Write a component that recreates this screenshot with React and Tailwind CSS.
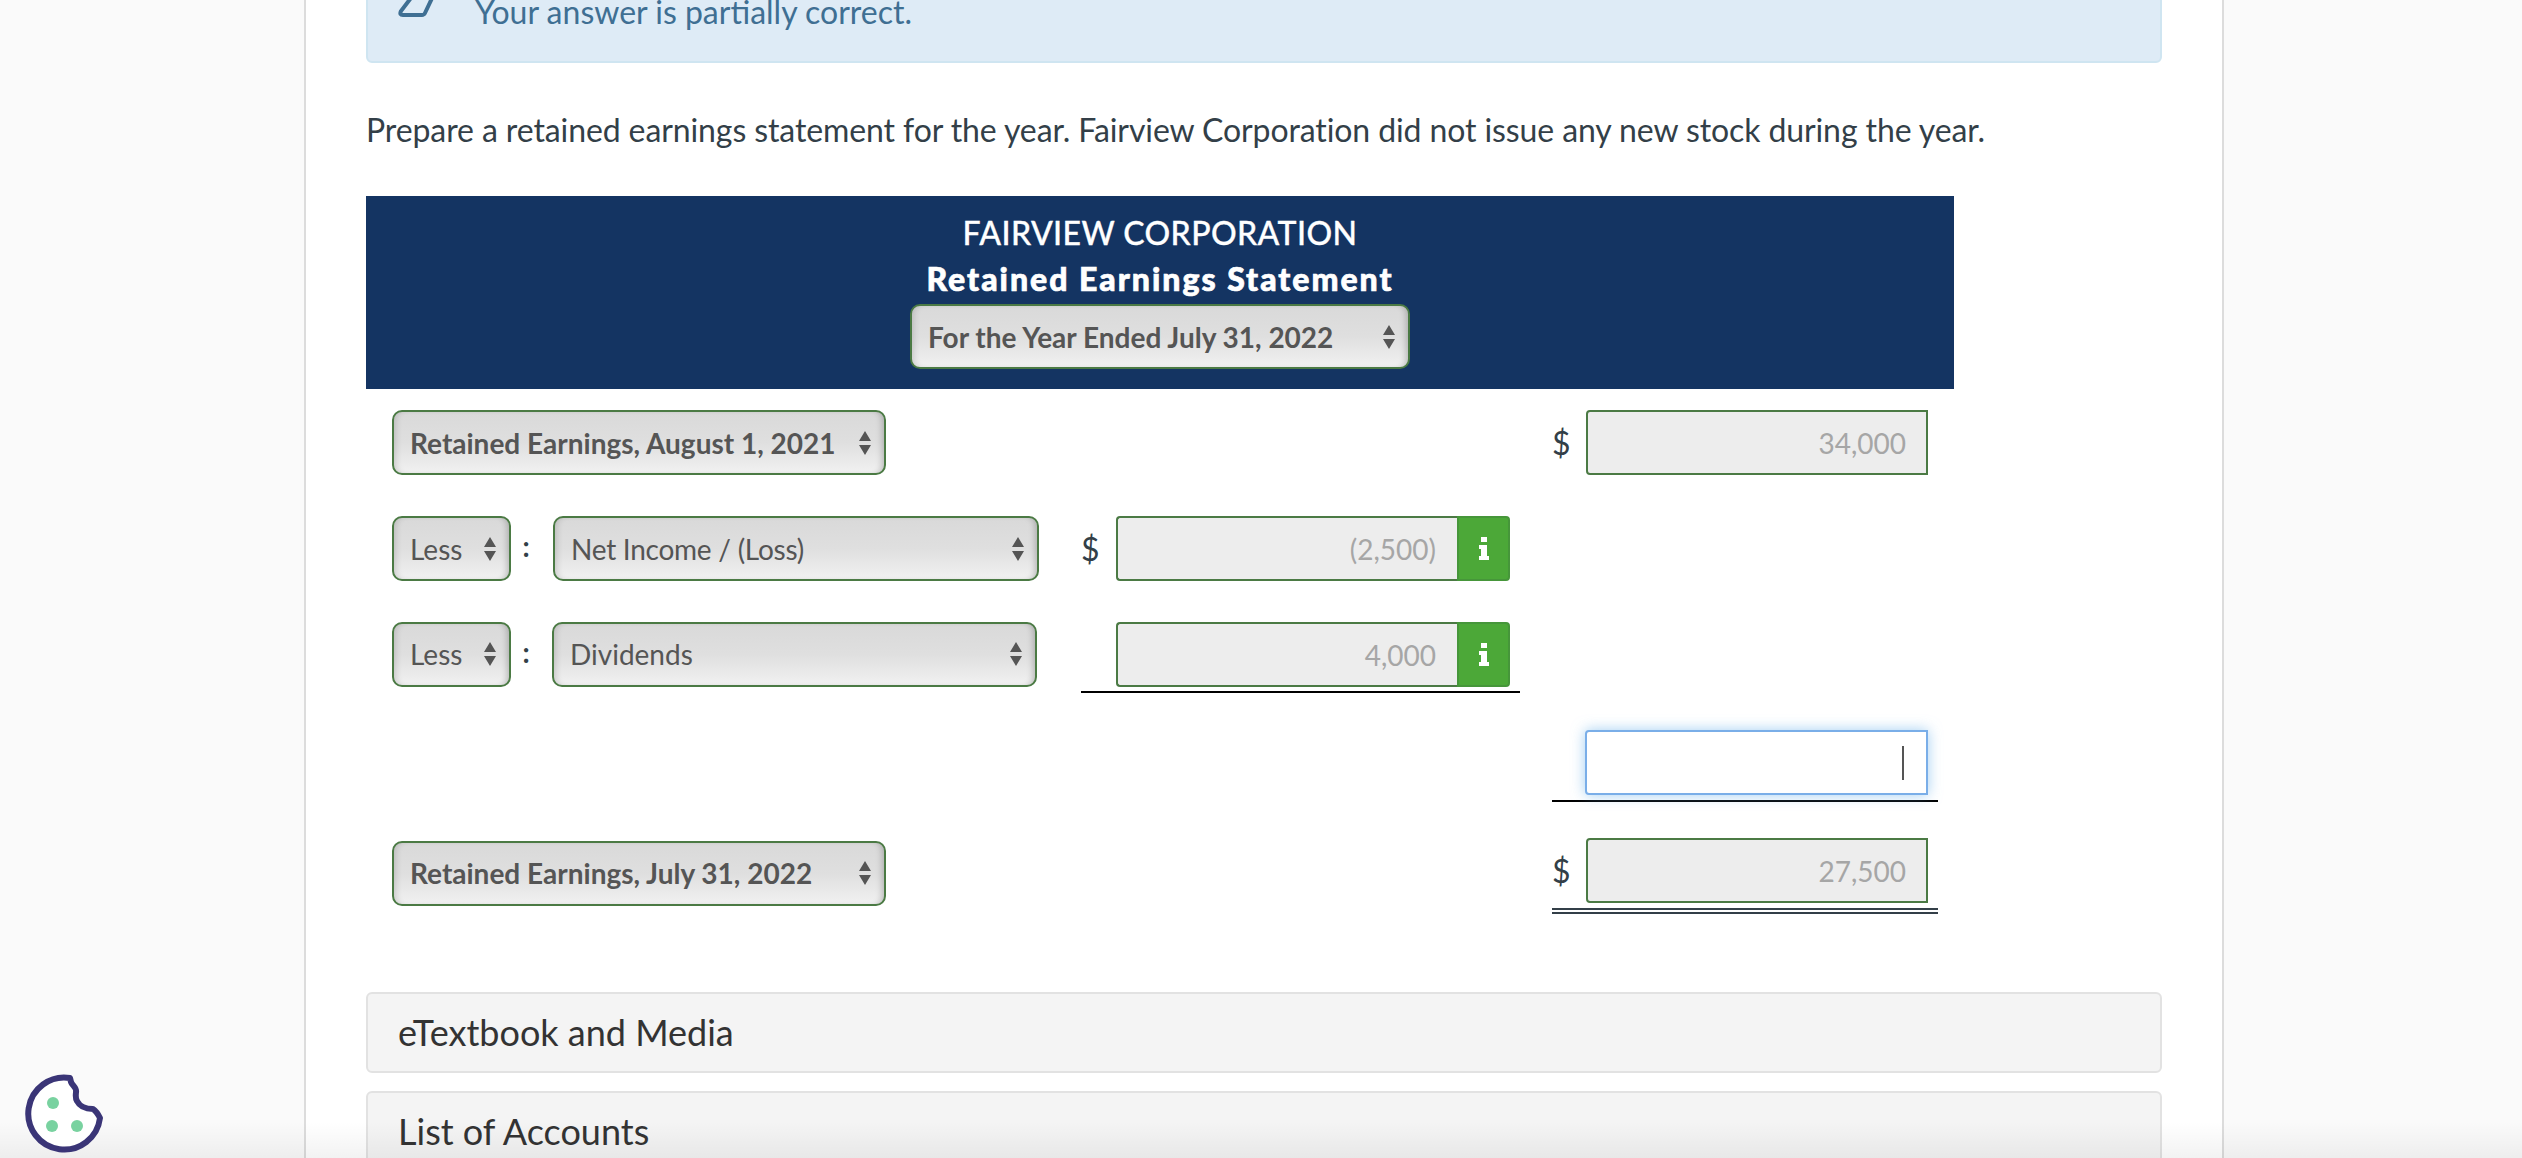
import React from 'react';

const SelectArrows = () => (
  <svg width="14" height="26" viewBox="0 0 14 26" className="shrink-0">
    <path d="M7 1 L13 11 L1 11 Z M1 15 L13 15 L7 25 Z" fill="#555" />
  </svg>
);

const Select = ({ label, bold, className }) => (
  <div
    className={`flex h-[65px] shrink-0 items-center justify-between rounded-[10px] border-2 border-[#4b7a44] bg-linear-to-b from-[#d9d9d9] via-[#dfdfdf] to-[#f1f1f1] pl-[16px] pr-[12px] text-[28px] text-[#555] shadow-[inset_6px_0_6px_-4px_rgba(0,0,0,0.15),inset_-6px_0_6px_-4px_rgba(0,0,0,0.22)] ${bold ? 'font-bold' : ''} ${className}`}
  >
    <span className="whitespace-nowrap">{label}</span>
    <SelectArrows />
  </div>
);

const AmountBox = ({ value, hasInfo }) => (
  <div className="flex h-[65px] flex-1">
    <div
      className={`flex flex-1 items-center justify-end rounded-l-[4px] border-2 border-[#4b7a44] bg-[#ededed] text-[28px] text-[#a6a6a6] ${hasInfo ? 'border-r-0 pr-[21px]' : 'pr-[20px]'}`}
    >
      {value}
    </div>
    {hasInfo && (
      <div className="flex w-[53px] items-center justify-center rounded-r-[4px] border-2 border-[#46963a] bg-[#4ca838]">
        <svg width="12" height="24" viewBox="0 0 12 24">
          <path d="M3 0 H9 V5 H3 Z M1 8 H9 V19 H11 V23 H1 V19 H3 V12 H1 Z" fill="#fff" />
        </svg>
      </div>
    )}
  </div>
);

const Dollar = ({ className }) => (
  <span className={`shrink-0 text-[32px] leading-[65px] text-[#333f48] ${className}`}>$</span>
);

const Row = ({ left, middle, right, className }) => (
  <div className={`flex items-start ${className}`}>
    <div className="flex w-[715px] shrink-0 items-start pl-[26px]">{left}</div>
    <div className="w-[439px] shrink-0">{middle}</div>
    <div className="ml-[32px] w-[386px] shrink-0">{right}</div>
  </div>
);

const Colon = ({ className }) => (
  <span className={`w-[30px] text-center text-[28px] font-bold leading-[60px] text-[#333f48] ${className}`}>:</span>
);

const Panel = ({ title, className }) => (
  <div className={`flex h-[81px] items-center rounded-[6px] border-2 border-[#e2e2e2] bg-[#f4f4f4] pb-[2px] pl-[30px] text-[36px] text-[#333] ${className}`}>
    {title}
  </div>
);

export default function App() {
  return (
    <div className="relative h-[1158px] overflow-hidden bg-[#fafafa] font-['Lato',sans-serif]">
      <main className="ml-[304px] flow-root h-full w-[1920px] border-x-2 border-[#dcdcdc] bg-white px-[60px]">
        {/* alert is scrolled mostly out of view */}
        <div className="-mt-[40px] flex h-[103px] items-start rounded-[6px] border-2 border-[#cfe5f1] bg-[#deebf6] pl-[30px] pt-[27px] text-[32px] leading-[46px] text-[#3f6f93]">
          <svg width="42" height="32" viewBox="0 0 42 32" className="-mt-[4px] shrink-0">
            <path d="M22 0 H40 L36 8 H16 Z" fill="#3f6f93" />
            <path d="M16 9 H36 L27 28 Q26 30 24 30 H5 Q1 30 3 26 Z" fill="none" stroke="#3f6f93" strokeWidth="4" />
          </svg>
          <span className="ml-[35px]">Your answer is partially correct.</span>
        </div>

        <p className="mt-[44px] h-[46px] whitespace-nowrap text-[32px] leading-[46px] tracking-[-0.1px] text-[#333f48]">
          Prepare a retained earnings statement for the year. Fairview Corporation did not issue any new stock during the year.
        </p>

        <section className="mt-[43px] w-[1588px]">
          <div className="flex h-[193px] flex-col items-center bg-[#143462] pt-[14px] text-[32px] leading-[46px] text-white">
            <div className="font-medium tracking-[0.4px] [-webkit-text-stroke:0.3px_white]">FAIRVIEW CORPORATION</div>
            <div className="font-black tracking-[2px] [-webkit-text-stroke:0.7px_white]">Retained Earnings Statement</div>
            <Select label="For the Year Ended July 31, 2022" bold className="mt-[2px] w-[500px]" />
          </div>

          <Row
            className="mt-[21px]"
            left={<Select label="Retained Earnings, August 1, 2021" bold className="w-[494px]" />}
            right={
              <div className="flex pr-[10px]">
                <Dollar className="w-[34px]" />
                <AmountBox value="34,000" />
              </div>
            }
          />

          <Row
            className="mt-[41px]"
            left={
              <>
                <Select label="Less" className="w-[119px]" />
                <Colon className="mr-[12px]" />
                <Select label="Net Income / (Loss)" className="w-[486px] tracking-[-0.25px]" />
              </>
            }
            middle={
              <div className="flex pr-[10px]">
                <Dollar className="w-[35px]" />
                <AmountBox value="(2,500)" hasInfo />
              </div>
            }
          />

          <Row
            className="mt-[41px]"
            left={
              <>
                <Select label="Less" className="w-[119px] pb-px" />
                <Colon className="mr-[11px]" />
                <Select label="Dividends" className="w-[485px] pb-px" />
              </>
            }
            middle={
              <div className="border-b-2 border-black pb-[4px] pl-[35px] pr-[10px]">
                <div className="flex">
                  <AmountBox value="4,000" hasInfo />
                </div>
              </div>
            }
          />

          <Row
            className="mt-[37px]"
            right={
              <div className="border-b-2 border-black pb-[5px] pl-[33px] pr-[10px]">
                <div className="flex h-[65px] items-center justify-end rounded-l-[4px] border-2 border-[#7aaee8] bg-white pr-[22px] shadow-[0_0_14px_rgba(102,175,233,0.6)]">
                  <div className="h-[34px] w-[2px] bg-[#555]" />
                </div>
              </div>
            }
          />

          <Row
            className="mt-[36px]"
            left={<Select label="Retained Earnings, July 31, 2022" bold className="mt-[3px] w-[494px] pb-px" />}
            right={
              <div className="border-b-[6px] border-double border-[#333f48] pb-[5px] pr-[10px]">
                <div className="flex">
                  <Dollar className="w-[34px]" />
                  <AmountBox value="27,500" />
                </div>
              </div>
            }
          />
        </section>

        <Panel title="eTextbook and Media" className="mt-[78px]" />
        <Panel title="List of Accounts" className="mt-[18px]" />
      </main>

      {/* fade along the bottom of the window */}
      <div className="pointer-events-none absolute inset-x-0 bottom-0 h-[36px] bg-linear-to-b from-transparent to-black/5" />

      {/* cookie settings badge */}
      <svg width="80" height="80" viewBox="0 0 80 80" className="absolute bottom-[4px] left-[24px]" fill="none">
        <path
          d="M46 4 A36 36 0 1 0 76 44 C74 40 72 37 69 35 C62 35 56 33 53 27 C51 24 52 20 52 18 C53 14 48 11 47 8 Z"
          fill="#fff"
          stroke="#3a3577"
          strokeWidth="6"
          strokeLinejoin="round"
        />
        <circle cx="29" cy="29" r="6" fill="#79d2a0" />
        <circle cx="28" cy="52" r="6" fill="#79d2a0" />
        <circle cx="53" cy="52" r="6" fill="#79d2a0" />
      </svg>
    </div>
  );
}
